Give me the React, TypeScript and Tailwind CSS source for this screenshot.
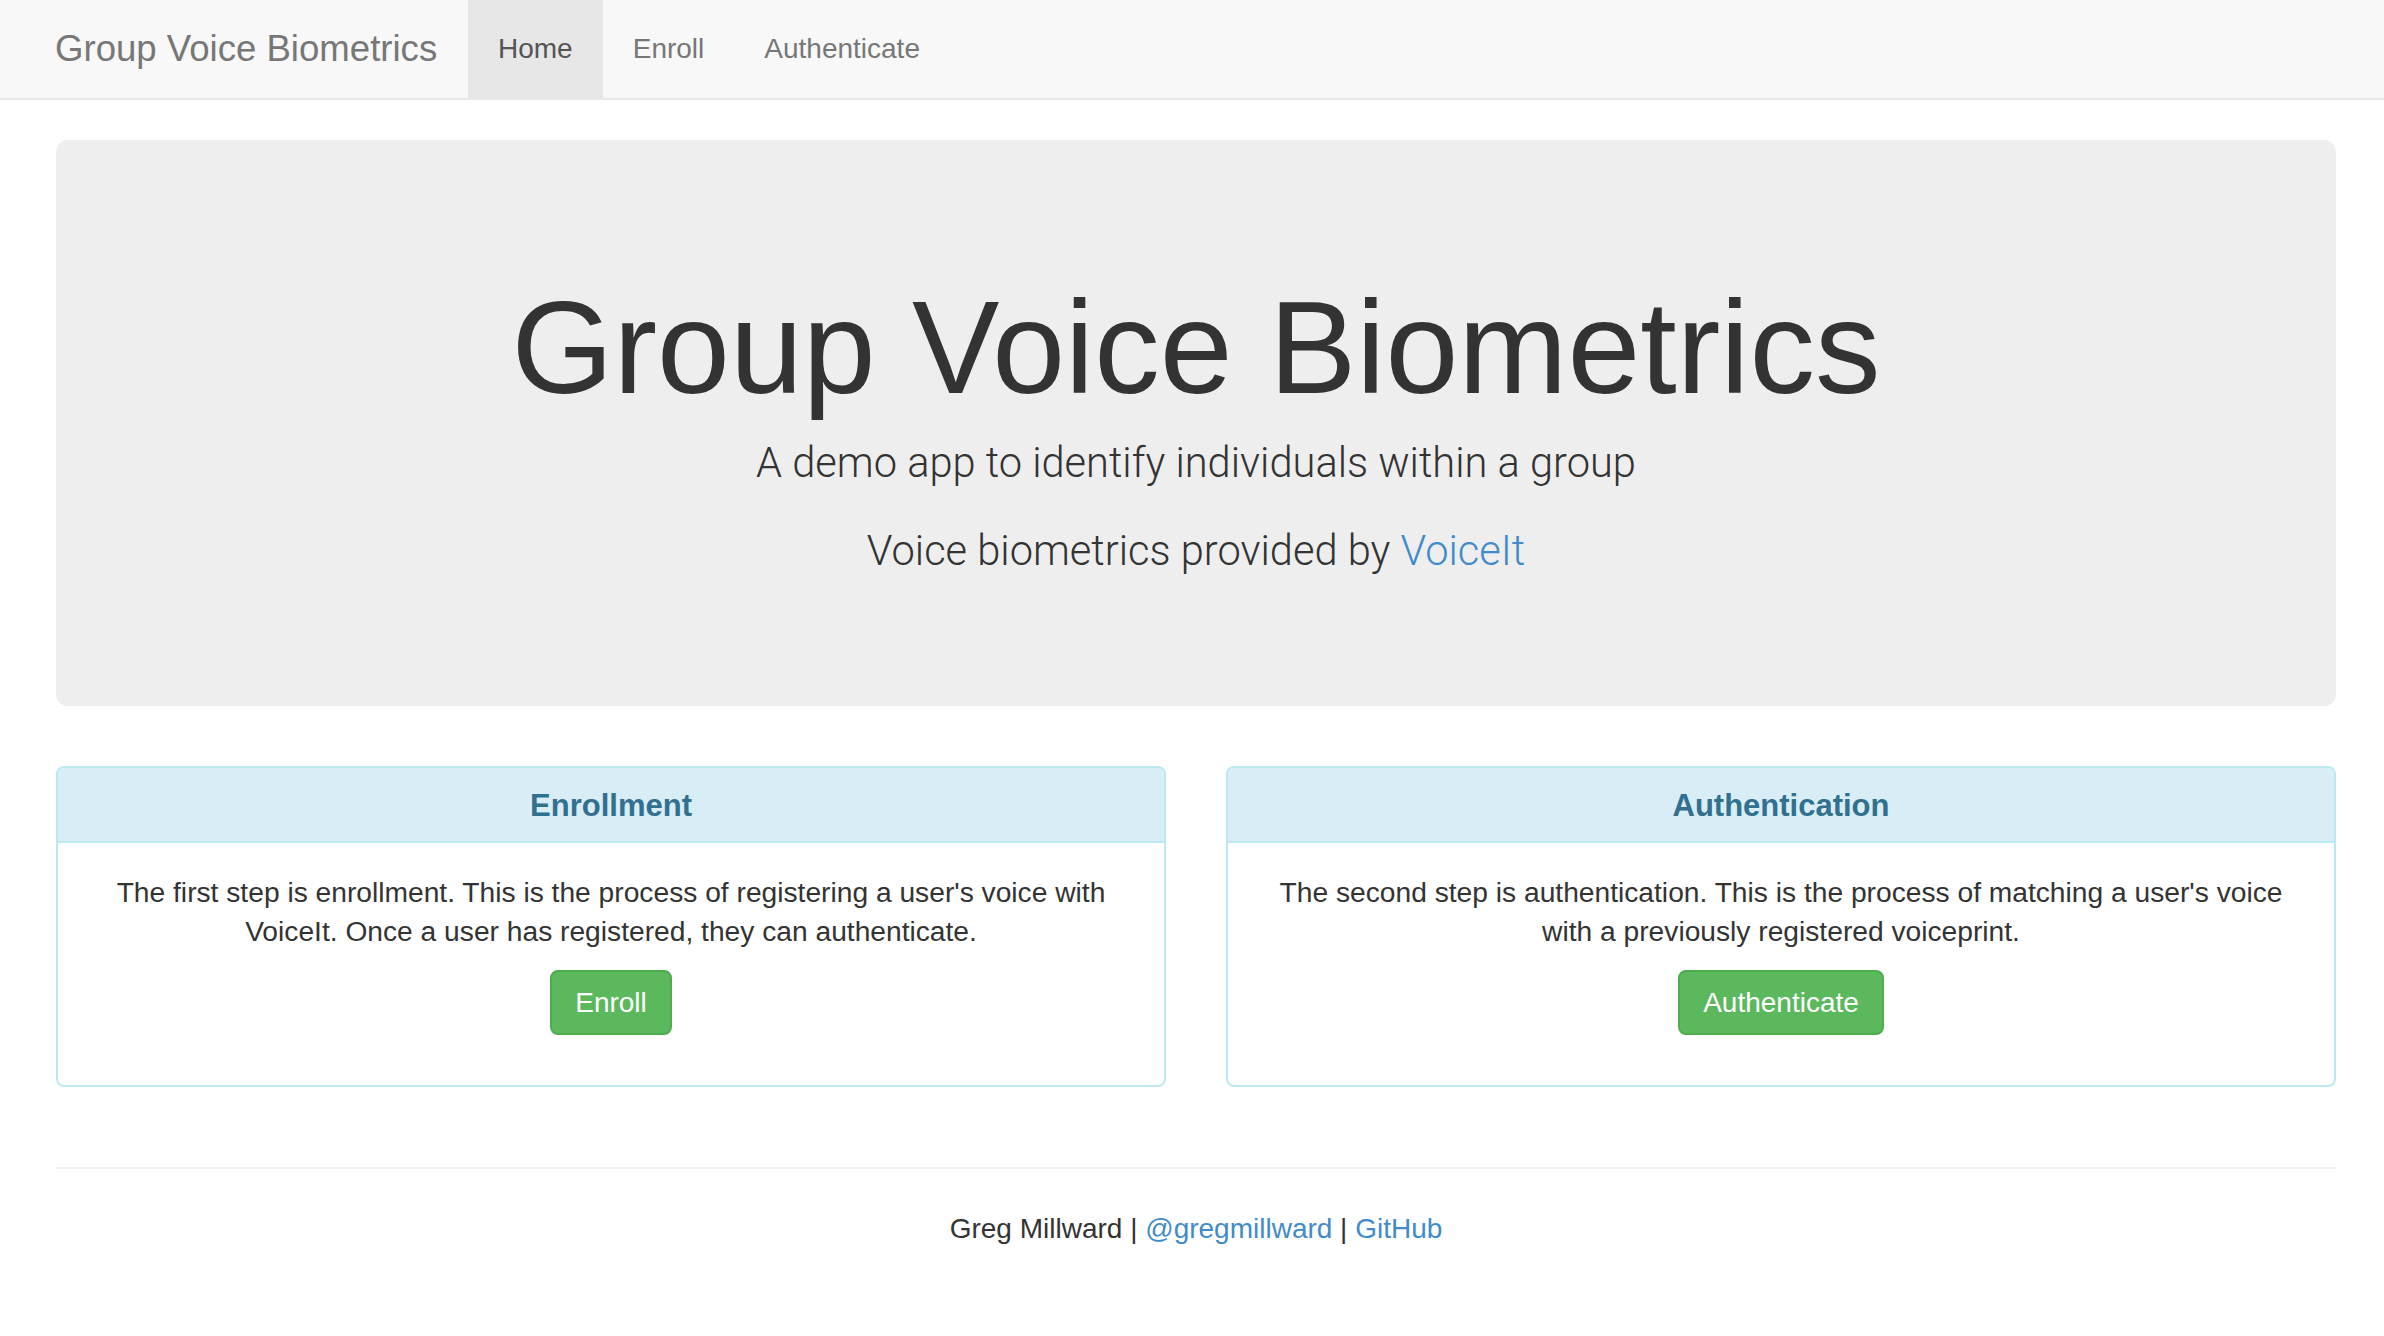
import React from "react";

export default function App() {
  return (
    <div className="min-h-[1336px] bg-white font-['Liberation_Sans',Arial,sans-serif] text-[#333]">
      {/* Navbar */}
      <nav className="h-[100px] bg-[#f8f8f8] border-b-2 border-[#e7e7e7] flex items-stretch pl-[25px]">
        <a className="w-[443px] pl-[30px] flex items-center text-[36.6px] text-[#777] leading-none">Group Voice Biometrics</a>
        <a className="px-[30px] flex items-center text-[28px] text-[#555] bg-[#e7e7e7]">Home</a>
        <a className="px-[30px] flex items-center text-[28px] text-[#777]">Enroll</a>
        <a className="px-[30px] flex items-center text-[28px] text-[#777]">Authenticate</a>
      </nav>

      <div className="ml-[56px] w-[2280px] pt-[40px]">
        {/* Jumbotron */}
        <div className="h-[566px] rounded-[12px] bg-[#eeeeee] text-center pt-[136px]">
          <h1 className="text-[131px] leading-[144px] text-[#333] m-0">Group Voice Biometrics</h1>
          <p className="mt-[13px] text-[41.6px] leading-[60px] font-['Roboto',sans-serif] font-light">A demo app to identify individuals within a group</p>
          <p className="mt-[28px] text-[41.6px] leading-[60px] font-['Roboto',sans-serif] font-light">
            Voice biometrics provided by <a className="text-[#428bca]">VoiceIt</a>
          </p>
        </div>

        {/* Panels */}
        <div className="mt-[60px] grid grid-cols-2 gap-[60px]">
          {[
            {
              title: "Enrollment",
              text: "The first step is enrollment. This is the process of registering a user's voice with VoiceIt. Once a user has registered, they can authenticate.",
              btn: "Enroll",
            },
            {
              title: "Authentication",
              text: "The second step is authentication. This is the process of matching a user's voice with a previously registered voiceprint.",
              btn: "Authenticate",
            },
          ].map((p) => (
            <div key={p.title} className="border-2 border-[#bce8f1] rounded-[8px] overflow-hidden bg-white">
              <div className="h-[75px] bg-[#d9edf7] border-b-2 border-[#bce8f1] flex items-center justify-center">
                <h3 className="text-[31px] font-bold text-[#31708f] leading-none mt-[2px]">{p.title}</h3>
              </div>
              <div className="px-[30px] pt-[30px] pb-[50px] text-center">
                <p className="text-[28.2px] leading-[39px] text-[#333]">{p.text}</p>
                <div className="mt-[19px] flex justify-center">
                  <button className="h-[65px] px-[23px] border-2 border-[#4cae4c] bg-[#5cb85c] text-white text-[28px] rounded-[8px] flex items-center">
                    {p.btn}
                  </button>
                </div>
              </div>
            </div>
          ))}
        </div>

        {/* Footer */}
        <hr className="mt-[80px] border-0 border-t-2 border-[#eeeeee]" />
        <footer className="mt-[40px] text-center text-[28px] leading-[40px] text-[#333]">
          Greg Millward | <a className="text-[#428bca]">@gregmillward</a> | <a className="text-[#428bca]">GitHub</a>
        </footer>
      </div>
    </div>
  );
}
